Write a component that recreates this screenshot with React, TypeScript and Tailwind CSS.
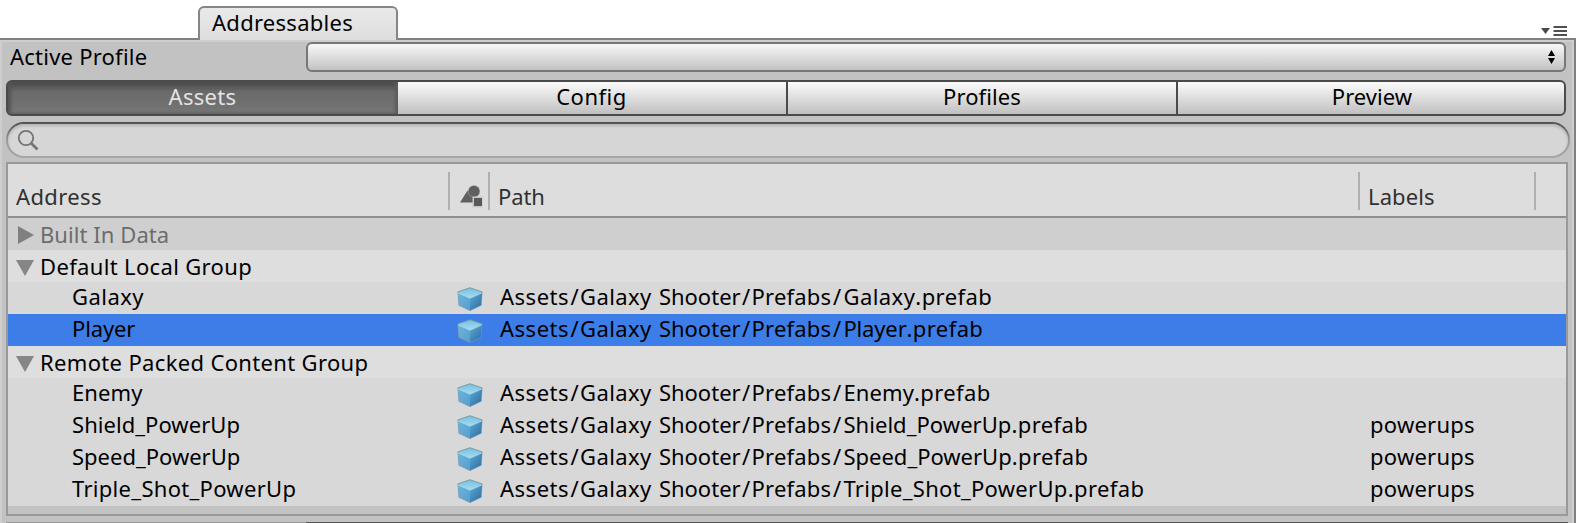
import React from "react";

type Row = { kind: "group" | "item"; name: string; nameCls: string; hasPath?: boolean; label?: string; bg: string; open?: boolean };

const rows: Row[] = [
  { kind: "group", name: "Built In Data", nameCls: "tracking-[0.07px]", bg: "bg-[#cfcfcf] text-[#6c6c6c]", open: false },
  { kind: "group", name: "Default Local Group", nameCls: "tracking-[0.34px]", bg: "bg-[#dedede]", open: true },
  { kind: "item", name: "Galaxy", nameCls: "tracking-[0.45px]", bg: "bg-[#d8d8d8]" },
  { kind: "item", name: "Player", nameCls: "tracking-[-0.15px]", bg: "bg-[#3d7de7]" },
  { kind: "group", name: "Remote Packed Content Group", nameCls: "tracking-[0.34px]", bg: "bg-[#dedede]", open: true },
  { kind: "item", name: "Enemy", nameCls: "tracking-[0.1px]", bg: "bg-[#d8d8d8]" },
  { kind: "item", name: "Shield_PowerUp", nameCls: "tracking-[0.05px]", label: "powerups", bg: "bg-[#d8d8d8]" },
  { kind: "item", name: "Speed_PowerUp", nameCls: "tracking-[0px]", label: "powerups", bg: "bg-[#d8d8d8]" },
  { kind: "item", name: "Triple_Shot_PowerUp", nameCls: "tracking-[0.3px]", label: "powerups", bg: "bg-[#d8d8d8]" },
];

function Cube() {
  return (
    <svg className="mt-[5px] h-6 w-[26px]" viewBox="0 0 26 24">
      <defs>
        <linearGradient id="cl" x1="0" y1="0" x2="1" y2="1"><stop offset="0" stopColor="#6bb5da" /><stop offset="1" stopColor="#559fd0" /></linearGradient>
        <linearGradient id="cr" x1="0" y1="0" x2="0.8" y2="1"><stop offset="0" stopColor="#62a9d0" /><stop offset="1" stopColor="#2a70aa" /></linearGradient>
        <linearGradient id="ct" x1="0" y1="0" x2="0" y2="1"><stop offset="0" stopColor="#74c0e2" /><stop offset="1" stopColor="#a5def3" /></linearGradient>
      </defs>
      <path d="M0.5 4.500L13 0.300L25.500 4.500L24.500 18.500L13 24L1.500 18.500Z" fill="#7f99a6" />
      <path d="M1 5.500L13 11V23.500L2 18Z" fill="url(#cl)" />
      <path d="M25 5.500L13 11V23.500L24 18Z" fill="url(#cr)" />
      <path d="M1.200 5.200L13 1.200L24.800 5.200L13 11Z" fill="url(#ct)" />
      <path d="M1.500 6L13 11.200L24.500 6" fill="none" stroke="#a8dcf0" strokeWidth="1" />
    </svg>
  );
}

function Foldout({ open }: { open?: boolean }) {
  return (
    <svg className="h-8 w-8 shrink-0" viewBox="0 0 32 32">
      <path d={open ? "M8 10H26L17 26Z" : "M10 8L26 17L10 26Z"} fill={open ? "#868686" : "#808080"} />
    </svg>
  );
}

function PrefabPath({ name, nameCls }: { name: string; nameCls: string }) {
  return (
    <div className="w-[871px] leading-[28px]">
      <span className="tracking-[0.5px]">Assets</span>
      <span className="ml-[1.5px] mr-px tracking-[0.3px]">/</span>
      <span className="tracking-[0.4px]">Galaxy</span>
      <span className="tracking-[1.5px]"> </span>
      <span className="tracking-[0px]">Shooter</span>
      <span className="mx-[1.4px] tracking-[0px]">/</span>
      <span className="tracking-[0.2px]">Prefabs</span>
      <span className="mr-[2px] ml-[1.6px] tracking-[0.3px]">/</span>
      <span className={nameCls}>{name}</span>
      <span className="tracking-[0.4px]">.prefab</span>
    </div>
  );
}

function Tab({ text, cls }: { text: string; cls: string }) {
  return <div className={"flex h-full justify-center leading-[28px] " + cls}>{text}</div>;
}

export default function App() {
  return (
    <div className="flex h-[523px] w-[1580px] flex-col overflow-hidden bg-white font-['Noto_Sans','Lucida_Grande',sans-serif] text-[22px] whitespace-pre text-black">
      <div className="flex h-[38px] shrink-0 items-end justify-between pl-[198px]">
        <div className="relative z-10 -mb-[2px] h-[34px] w-[200px] rounded-t-[6px] border-2 border-b-0 border-[#868686] bg-linear-to-b from-[#e9e9e9] to-[#dedede] pl-3 leading-[29px] tracking-[0.27px]">Addressables</div>
        <svg className="mr-[12px] h-4 w-7" viewBox="0 0 28 16">
          <path d="M1 6H10L5.500 12Z" fill="#4a4a4a" />
          <path d="M13.500 5H27M13.500 9H27M13.500 13H27" stroke="#505050" strokeWidth="2" />
        </svg>
      </div>
      <div className="flex h-[485px] w-[1576px] flex-col border-t-2 border-r-2 border-[#808080] bg-[#c2c2c2] shadow-[inset_2px_2px_0_#cecece,inset_-2px_0_0_#cecece]">
        <div className="mt-[2px] flex h-[30px] shrink-0">
          <div className="w-[306px] pl-[10px] leading-[28px] tracking-[0.23px]">Active Profile</div>
          <div className="flex h-[30px] w-[1260px] justify-end rounded-[6px] border-2 border-[#777] bg-linear-to-b from-[#f8f8f8] to-[#c4c2c4] pr-[9px]">
            <svg className="mt-[6px] h-[14px] w-[7px]" viewBox="0 0 7 14"><path d="M3.500 0L7 6H0ZM3.500 14L7 8H0Z" /></svg>
          </div>
        </div>
        <div className="mt-2 ml-[6px] grid h-9 w-[1560px] shrink-0 grid-cols-[390px_390px_390px_386px] overflow-hidden rounded-[6px] border-2 border-[#4b4b4b] bg-[#4b4b4b]">
          <Tab text="Assets" cls="bg-linear-to-b from-[#474747] via-[#6a6a6a] via-30% to-[#757575] text-[#e4e4e4] shadow-[inset_3px_0_3px_#555,inset_-3px_0_3px_#5c5c5c] tracking-[0.3px] pr-px" />
          <Tab text="Config" cls="bg-linear-to-b from-[#fcfcfc] to-[#c0c0c0] tracking-[0.5px] border-r-2 border-[#4b4b4b] pr-px" />
          <Tab text="Profiles" cls="bg-linear-to-b from-[#fcfcfc] to-[#c0c0c0] tracking-[0.1px] border-r-2 border-[#4b4b4b]" />
          <Tab text="Preview" cls="bg-linear-to-b from-[#fcfcfc] to-[#c0c0c0] tracking-[0.05px] pl-[2px]" />
        </div>
        <div className="mt-[6px] ml-[6px] h-9 w-[1564px] shrink-0 rounded-full bg-linear-to-b from-[#505050] via-[#999] via-50% to-[#a6a6a6] p-[2px]">
          <div className="h-8 rounded-full bg-[#d6d6d6] pl-2 shadow-[inset_0_2px_3px_#b4b4b4]">
            <svg className="h-8 w-8" viewBox="0 0 32 32" fill="none" stroke="#747474"><circle cx="10" cy="14" r="7.200" strokeWidth="1.800" /><path d="M15 19L21.500 25.500" strokeWidth="2.600" /></svg>
          </div>
        </div>
        <div className="mt-1 ml-[6px] h-[354px] w-[1562px] shrink-0 border-2 border-[#999]">
          <div className="flex h-[54px] items-start border-b-2 border-[#8f8f8f] bg-[#ddd] pt-2 text-[#303030]">
            <div className="h-[38px] w-[442px] border-r-2 border-[#b0b0b0] pt-[9px] pl-2 leading-[30px] tracking-[0.38px]">Address</div>
            <div className="h-[38px] w-10 border-r-2 border-[#b0b0b0] pt-[13px] pl-[10px]">
              <svg className="h-[23px] w-[23px]" viewBox="0 0 23 23">
                <path d="M0 17.500L7.500 5.500L13 12V17.500Z" fill="#606060" />
                <circle cx="14" cy="6.300" r="5.900" fill="#5f5f5f" stroke="#b8b8b8" strokeWidth="0.500" />
                <path d="M12.500 11.500H22.500V22.500H12.500Z" fill="#c6c6c6" /><path d="M14 13H22V21H14Z" fill="#585858" />
              </svg>
            </div>
            <div className="h-[38px] w-[870px] border-r-2 border-[#b0b0b0] pt-[9px] pl-2 leading-[30px] tracking-[-0.1px]">Path</div>
            <div className="h-[38px] w-[176px] border-r-2 border-[#b0b0b0] pt-[9px] pl-2 leading-[30px] tracking-[0.1px]">Labels</div>
          </div>
          {rows.map((r) => (
            <div key={r.name} className={"flex h-8 " + r.bg}>
              {r.kind === "group" ? (
                <>
                  <Foldout open={r.open} />
                  <div className={"leading-[32px] " + r.nameCls}>{r.name}</div>
                </>
              ) : (
                <>
                  <div className={"w-[449px] pl-[64px] leading-[28px] " + r.nameCls}>{r.name}</div>
                  <div className="w-[43px]"><Cube /></div>
                  <PrefabPath name={r.name} nameCls={r.nameCls} />
                  <div className="-ml-px leading-[28px] tracking-[0.25px]">{r.label}</div>
                </>
              )}
            </div>
          ))}
        </div>
        <div className="mt-[6px] ml-[6px] flex h-px w-[1562px]">
          <div className="w-[300px] bg-[#999]" />
          <div className="grow bg-[#555]" />
        </div>
      </div>
    </div>
  );
}
